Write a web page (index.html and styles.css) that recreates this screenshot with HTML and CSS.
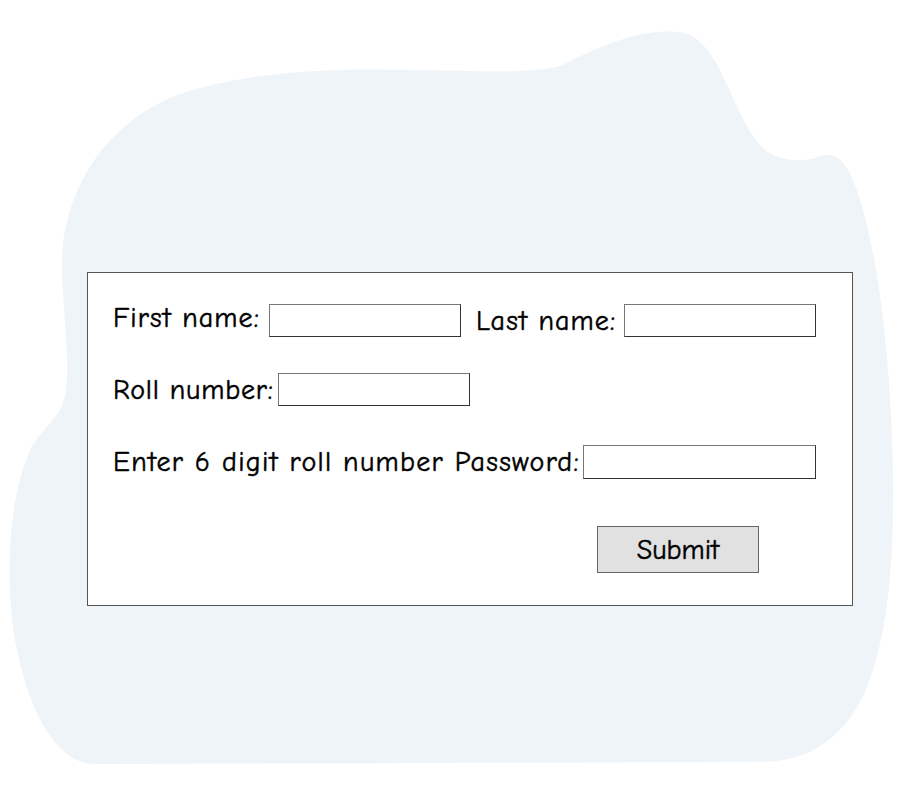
FILE: index.html
```html
<!DOCTYPE html>
<html lang="en">
<head>
<meta charset="UTF-8" />
<meta name="viewport" content="width=device-width, initial-scale=1" />
<title>Student Login</title>
<link rel="stylesheet" href="styles.css">
</head>
<body>
  <div class="page">
    <svg class="blob" width="900" height="800" viewBox="0 0 900 800" aria-hidden="true">
      <path d="M62 270 C60 190 110 110 200 88 C270 70 340 68 420 70 C480 71 530 74 560 66 C600 46 640 28 680 32 C720 38 730 110 760 145 C775 162 800 162 815 158 C826 154 836 150 848 170 C872 215 890 330 893 470 C895 600 880 690 840 730 C810 760 780 762 750 762 L95 764 C60 764 30 720 15 640 C5 580 8 500 30 450 C40 430 58 420 64 400 C72 370 63 320 62 270 Z" fill="#eff4f9"/>
    </svg>

    <form class="login" onsubmit="return false">
      <div class="row">
        <label class="first"><span class="text">First name:</span><input type="text" class="field"></label>
        <label class="last"><span class="text">Last name:</span><input type="text" class="field"></label>
      </div>
      <div class="row">
        <label class="roll"><span class="text">Roll number:</span><input type="text" class="field"></label>
      </div>
      <div class="row pass-row">
        <label class="pass"><span class="text">Enter 6 digit roll number Password:</span><input type="password" class="field wide"></label>
      </div>
      <div class="row actions">
        <button type="submit" class="submit">Submit</button>
      </div>
    </form>
  </div>
</body>
</html>
```

FILE: styles.css
```css
body {
  margin: 0;
  font-family: "Comic Sans MS", "Comic Neue", cursive;
  background: #fff;
  color: #000;
}

.page {
  position: relative;
  width: 900px;
  height: 800px;
  overflow: hidden;
}

.blob {
  position: absolute;
  top: 0;
  left: 0;
}

.login {
  position: relative;
  box-sizing: border-box;
  width: 766px;
  height: 334px;
  margin: 0;
  top: 272px;
  left: 87px;
  background: #fff;
  border: 1px solid #555;
  padding: 31px 36px 0 25px;
}

.row {
  display: flex;
  align-items: center;
  margin-bottom: 36px;
  font-size: 28px;
  letter-spacing: 1.1px;
  -webkit-text-stroke: 0.5px #000;
}

.row label {
  display: flex;
  align-items: center;
}

.text {
  white-space: nowrap;
}

.first .text { width: 156px; margin-top: -6px; }
.last .text { width: 148px; }
.roll .text { width: 165px; letter-spacing: 0.8px; }
.pass .text { width: 470px; letter-spacing: 1.3px; }

.last {
  margin-left: 15px;
}

.pass-row {
  margin-top: 39px;
}

.field {
  box-sizing: border-box;
  width: 192px;
  height: 33px;
  border: 1px solid #333;
  border-top-color: #777;
  border-left-color: #777;
  font: inherit;
  font-size: 16px;
  letter-spacing: normal;
  -webkit-text-stroke: 0;
  padding: 2px 4px;
  margin: 0;
}

.field.wide {
  width: 233px;
  height: 34px;
}

.actions {
  justify-content: flex-end;
  padding-right: 57px;
  margin-top: 47px;
}

.submit {
  width: 162px;
  height: 47px;
  background: #e1e1e1;
  border: 1px solid #666;
  font: inherit;
  font-size: 28px;
  cursor: pointer;
}
```
